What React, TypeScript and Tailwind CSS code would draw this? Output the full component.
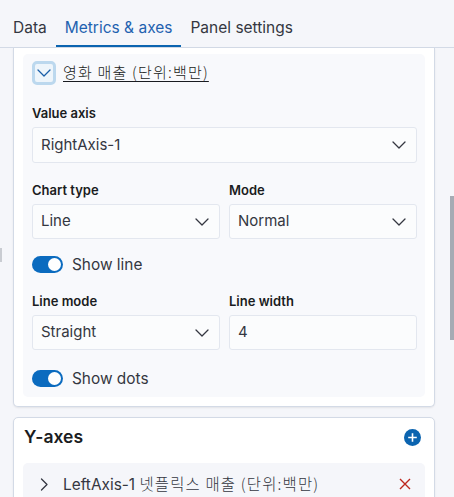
import React from "react";

const font = { fontFamily: 'Inter, "Noto Sans CJK KR", sans-serif' };

function ChevronDown({ className = "" }: { className?: string }) {
  return (
    <svg width="14" height="8" viewBox="0 0 14 8" className={className} fill="none">
      <path d="M1 1l6 6 6-6" stroke="currentColor" strokeWidth="1.3" strokeLinecap="round" strokeLinejoin="round" />
    </svg>
  );
}

function Select({ value, className = "" }: { value: string; className?: string }) {
  return (
    <div className={`flex h-[35px] items-center justify-between rounded-[3px] border border-[#e3e7ef] bg-[#fbfcfd] pl-[8px] pr-[10px] text-[15px] text-[#343741] ${className}`}>
      <span>{value}</span>
      <ChevronDown className="text-[#343741]" />
    </div>
  );
}

function Field({ label, children, className = "" }: { label: string; children: React.ReactNode; className?: string }) {
  return (
    <div className={`flex flex-col ${className}`}>
      <div className="h-[18px] text-[13px] font-semibold leading-[18px] text-[#1a1c21]">{label}</div>
      <div className="mt-[5px]">{children}</div>
    </div>
  );
}

function Toggle({ label, className = "" }: { label: string; className?: string }) {
  return (
    <div className={`flex items-center gap-[9px] ${className}`}>
      <div className="flex h-[17px] w-[31px] items-center justify-end rounded-full bg-[#0b6bbf] pr-[2px]">
        <div className="h-[13px] w-[13px] rounded-full bg-white" />
      </div>
      <span className="text-[15.4px] leading-[17px] text-[#343741]">{label}</span>
    </div>
  );
}

const ko = "font-['Noto_Sans_CJK_KR'] font-light tracking-[1.2px]";

export default function App() {
  return (
    <div className="relative h-[497px] w-[454px] overflow-hidden bg-[#f5f6fa]" style={font}>
      {/* tabs */}
      <div className="flex h-[48px] items-end border-b border-[#d3dae6] pl-[4px]">
        <div className="flex h-[47px] items-center px-[9px] pt-[9px] text-[15.5px] text-[#343741]">Data</div>
        <div className="flex h-[47px] items-center border-b-[2px] border-[#0b64b0] px-[9px] pt-[11px] text-[15.5px] text-[#1f62b0]">Metrics &amp; axes</div>
        <div className="flex h-[47px] items-center px-[9px] pt-[9px] text-[15.5px] text-[#343741]">Panel settings</div>
      </div>

      <div className="flex pl-[13px]">
        <div className="flex w-[422px] flex-col">
          {/* metrics card */}
          <div className="rounded-b-[5px] border-x border-b border-[#d3dae6] bg-white px-[9px] pb-[9px] pt-[6px] shadow-[0_1px_2px_rgba(0,0,0,0.08)]">
            <div className="rounded-[5px] bg-[#f8f9fc] pb-[10px] pl-[9px] pr-[8px] pt-[7px]">
              <div className="flex items-center gap-[7px]">
                <div className="flex h-[24px] w-[24px] items-center justify-center rounded-[5px] border-[3px] border-[#bcd8ee] bg-[#eef5fb]">
                  <ChevronDown className="text-[#1a5fa8]" />
                </div>
                <span className="text-[15px] text-[#1a1c21] underline decoration-1 underline-offset-[3px]">
                  <span className={ko}>영화 매출 (단위:백만)</span>
                </span>
              </div>

              <Field label="Value axis" className="mt-[19px]">
                <Select value="RightAxis-1" className="h-[36px]" />
              </Field>

              <div className="mt-[18px] grid grid-cols-2 gap-[9px]">
                <Field label="Chart type">
                  <Select value="Line" />
                </Field>
                <Field label="Mode">
                  <Select value="Normal" />
                </Field>
              </div>

              <Toggle label="Show line" className="mt-[17px]" />

              <div className="mt-[19px] grid grid-cols-2 gap-[9px]">
                <Field label="Line mode">
                  <Select value="Straight" />
                </Field>
                <Field label="Line width">
                  <div className="flex h-[35px] items-center rounded-[3px] border border-[#e3e7ef] bg-[#fbfcfd] pl-[8px] text-[15px] text-[#343741]">4</div>
                </Field>
              </div>

              <Toggle label="Show dots" className="mt-[20px]" />
            </div>
          </div>

          {/* Y-axes card */}
          <div className="mt-[10px] rounded-[5px] border border-[#d3dae6] bg-white px-[9px] pt-[7px] shadow-[0_1px_2px_rgba(0,0,0,0.08)]">
            <div className="flex h-[24px] items-center justify-between pr-[4px]">
              <span className="pl-[1px] text-[17.5px] font-semibold text-[#1a1c21]">Y-axes</span>
              <svg width="17" height="17" viewBox="0 0 17 17">
                <circle cx="8.5" cy="8.5" r="8.5" fill="#0b64b0" />
                <path d="M8.5 4.2v8.6M4.2 8.5h8.6" stroke="white" strokeWidth="1.6" />
              </svg>
            </div>
            <div className="mt-[14px] flex h-[44px] items-center rounded-t-[5px] bg-[#f5f6fa] pb-[2px] pl-[17px] pr-[14px] text-[15.4px] text-[#343741]">
              <svg width="8" height="13" viewBox="0 0 8 13" fill="none">
                <path d="M1.5 1l5.5 5.5L1.5 12" stroke="#343741" strokeWidth="1.3" strokeLinecap="round" strokeLinejoin="round" />
              </svg>
              <span className="ml-[15px] flex-1">
                LeftAxis-1 <span className={ko}>넷플릭스 매출 (단위:백만)</span>
              </span>
              <svg width="12" height="12" viewBox="0 0 12 12">
                <path d="M1 1l10 10M11 1L1 11" stroke="#bd271e" strokeWidth="1.4" />
              </svg>
            </div>
          </div>
        </div>
      </div>

      {/* scrollbars */}
      <div className="absolute left-[450px] top-[196px] h-[144px] w-[4px] bg-[#a6abb4]" />
      <div className="absolute left-0 top-[248px] h-[14px] w-[2px] bg-[#c9ccd2]" />
    </div>
  );
}
